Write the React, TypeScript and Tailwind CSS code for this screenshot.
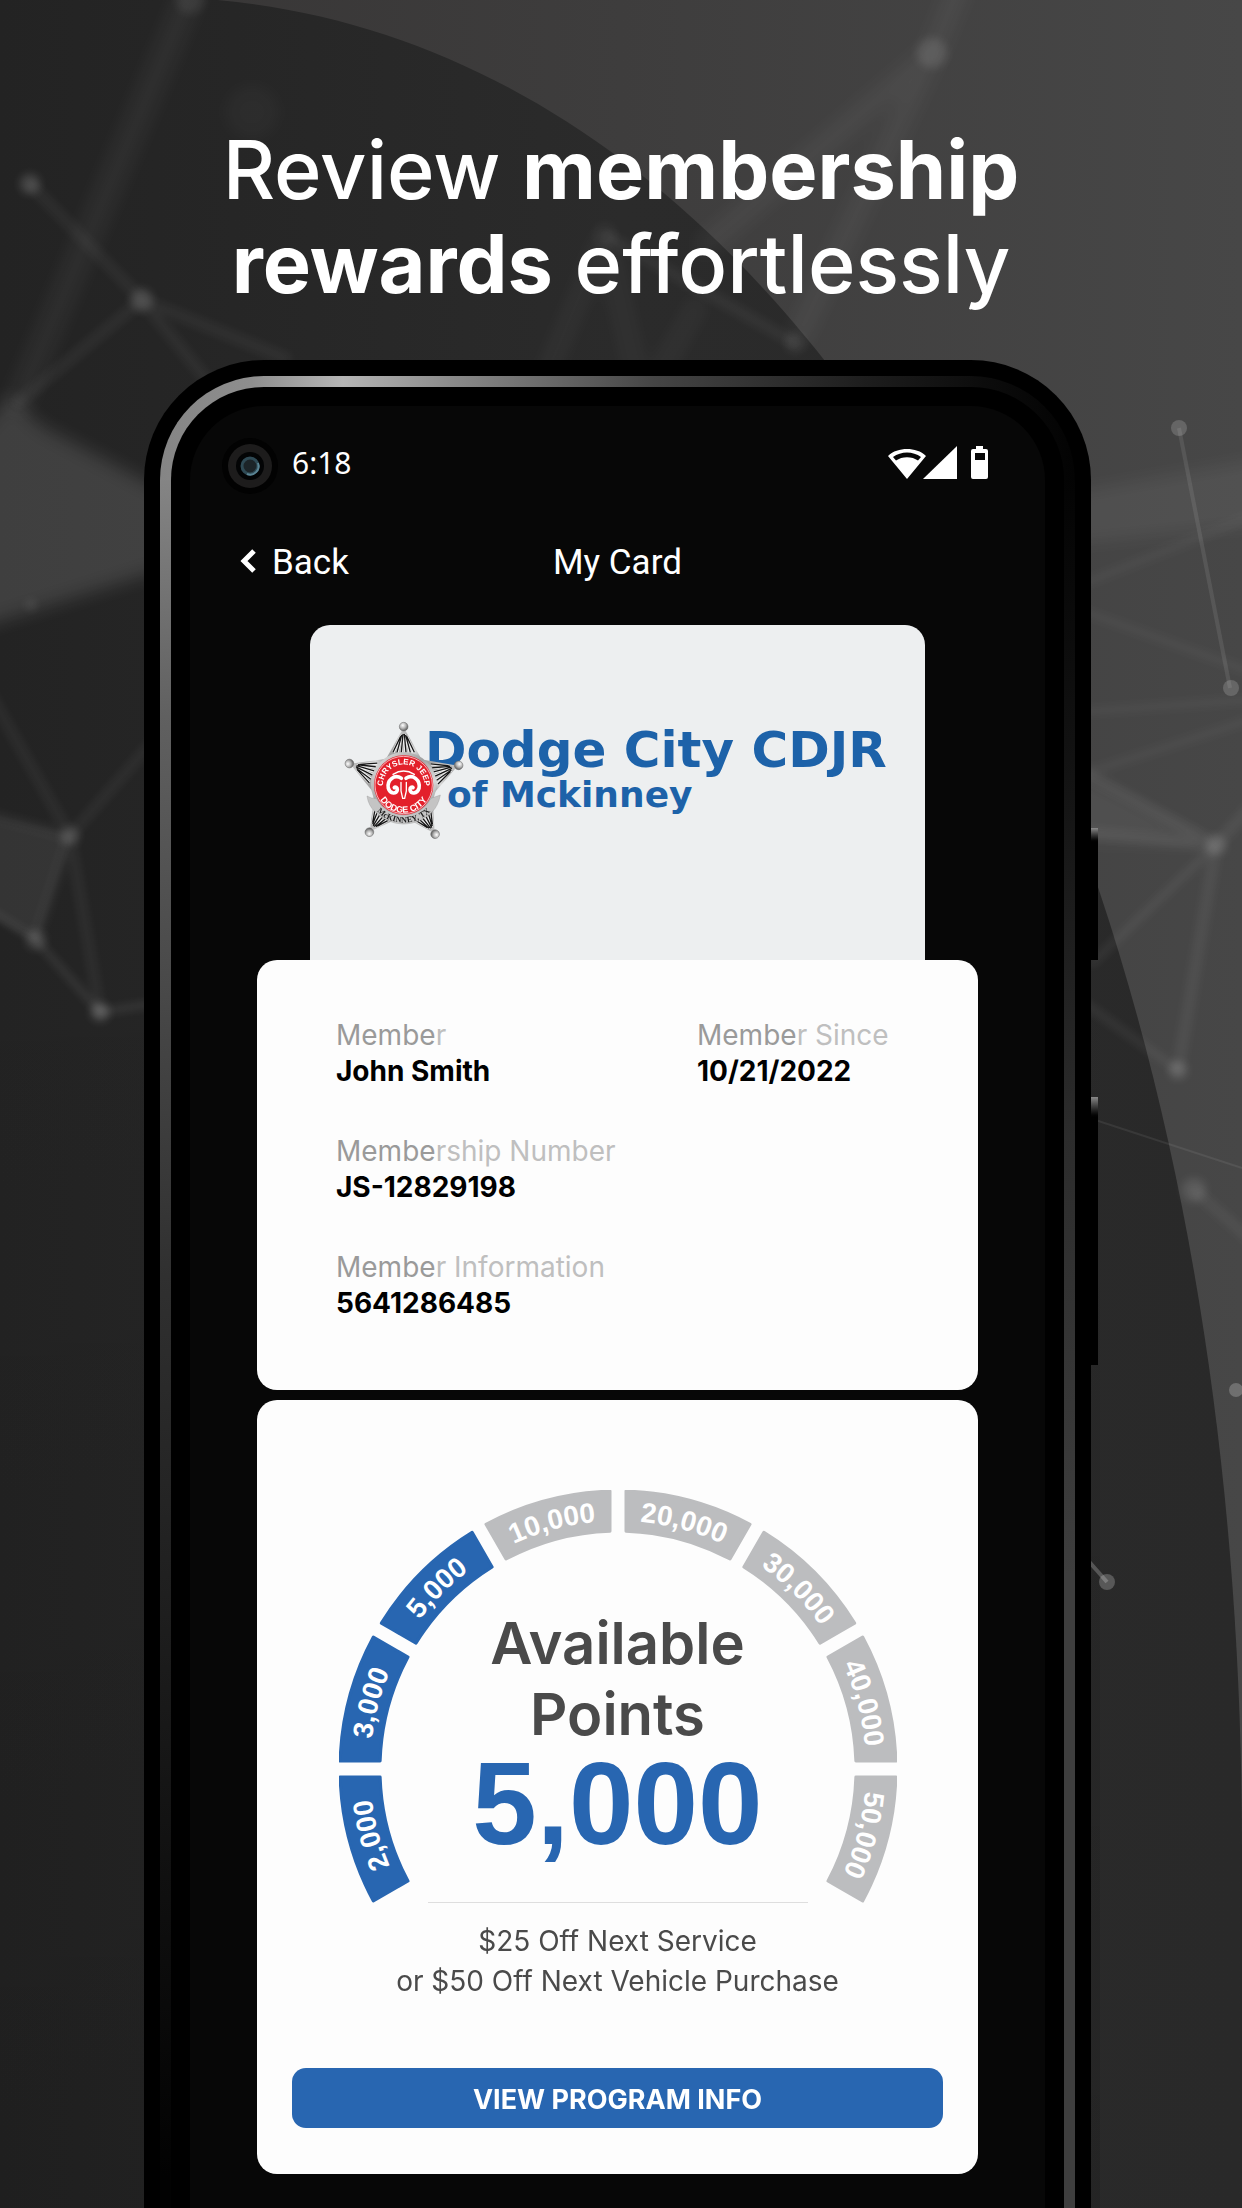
import { Fragment } from "react";

type Segment = { label: string; reached: boolean };

const SEGMENTS: Segment[] = [
  { label: "2,000", reached: true },
  { label: "3,000", reached: true },
  { label: "5,000", reached: true },
  { label: "10,000", reached: false },
  { label: "20,000", reached: false },
  { label: "30,000", reached: false },
  { label: "40,000", reached: false },
  { label: "50,000", reached: false },
];

const FIELDS = [
  { lead: "Membe", rest: "r", value: "John Smith", wide: false },
  { lead: "Membe", rest: "r Since", value: "10/21/2022", wide: false },
  { lead: "Membe", rest: "rship Number", value: "JS-12829198", wide: true },
  { lead: "Membe", rest: "r Information", value: "5641286485", wide: true },
];

const CENTER = 279;
const OUTER = 278;
const INNER = 238;
const HALF_GAP = 8;

/** Point on a circle round the gauge centre; angle in degrees clockwise from the top. */
function polar(radius: number, angle: number) {
  const rad = (angle * Math.PI) / 180;
  return `${(CENTER + radius * Math.sin(rad)).toFixed(2)} ${(CENTER - radius * Math.cos(rad)).toFixed(2)}`;
}

function segmentPath(start: number) {
  const end = start + 30;
  const o = (Math.asin(HALF_GAP / OUTER) * 180) / Math.PI;
  const i = (Math.asin(HALF_GAP / INNER) * 180) / Math.PI;
  return `M${polar(OUTER, start + o)} A${OUTER} ${OUTER} 0 0 1 ${polar(OUTER, end - o)} L${polar(INNER, end - i)} A${INNER} ${INNER} 0 0 0 ${polar(INNER, start + i)} Z`;
}

function Gauge() {
  return (
    <svg viewBox="0 0 558 413" className="col-start-1 row-start-1 w-full" aria-label="Reward levels">
      {SEGMENTS.map((s, n) => {
        const start = -120 + n * 30;
        const color = s.reached ? "#2866b1" : "#bcbdbf";
        return (
          <Fragment key={s.label}>
            <path d={segmentPath(start)} fill={color} stroke={color} strokeWidth="3" strokeLinejoin="round" />
            <path id={`level-${n}`} d={`M${polar(248, start)} A248 248 0 0 1 ${polar(248, start + 30)}`} fill="none" />
            <text fill="#fff" fontSize="28" fontWeight="700" textAnchor="middle" className="font-['Liberation_Sans',sans-serif]">
              <textPath href={`#level-${n}`} startOffset="50%">
                {s.label}
              </textPath>
            </text>
          </Fragment>
        );
      })}
    </svg>
  );
}

function Backdrop() {
  return (
    <svg
      viewBox="0 0 1242 2208"
      preserveAspectRatio="xMidYMid slice"
      className="absolute inset-0 h-full w-full"
      aria-hidden="true"
    >
      <defs>
        <linearGradient id="bg-light" x1="0" y1="0" x2="1" y2="0">
          <stop offset="0" stopColor="#363434" />
          <stop offset="0.5" stopColor="#3e3d3d" />
          <stop offset="1" stopColor="#474747" />
        </linearGradient>
        <linearGradient id="bg-dark" x1="0" y1="0" x2="1" y2="0">
          <stop offset="0" stopColor="#232323" />
          <stop offset="0.5" stopColor="#2b2b2b" />
          <stop offset="1" stopColor="#292929" />
        </linearGradient>
        <linearGradient id="bg-fade" x1="0" y1="0" x2="0" y2="1">
          <stop offset="0.4" stopColor="#000" stopOpacity="0" />
          <stop offset="1" stopColor="#000" stopOpacity="0.12" />
        </linearGradient>
        <filter id="soft4" filterUnits="userSpaceOnUse" x="-100" y="-100" width="1442" height="2408">
          <feGaussianBlur stdDeviation="4" />
        </filter>
        <filter id="soft10" filterUnits="userSpaceOnUse" x="-200" y="-200" width="1642" height="2608">
          <feGaussianBlur stdDeviation="9" />
        </filter>
      </defs>
      <rect width="1242" height="2208" fill="url(#bg-light)" />
      <path d="M0 -3 H150 C783 -3 1242 775 1242 1850 V2208 H0 Z" fill="url(#bg-dark)" />
      <rect width="1100" height="2208" fill="url(#bg-fade)" />
      <g fill="#fff" filter="url(#soft10)">
        <path d="M10 395 L40 425 L180 500 V564 L-60 640 V480 Z" opacity="0.13" />
        <path d="M1060 495 L1300 452 V520 L1060 545 Z" opacity="0.06" />
        <circle cx="252" cy="112" r="26" opacity="0.03" />
        <path d="M1060 765 L1216 845 L1060 840 Z" opacity="0.06" />
      </g>
      <path d="M-30 812 L70 836 L36 940 L-30 903 Z" fill="#fff" opacity="0.08" filter="url(#soft4)" />
      <g stroke="#fff" fill="none" filter="url(#soft10)">
        <path d="M196 -20 L15 410" strokeWidth="24" opacity="0.05" />
        <path d="M605 235 L540 390 M605 235 L640 390 M700 300 L650 390" strokeWidth="14" opacity="0.05" />
        <path d="M970 -40 L932 53 L795 343 M932 53 L700 250" strokeWidth="20" opacity="0.05" />
      </g>
      <g stroke="#fff" fill="none" filter="url(#soft4)">
        <path
          d="M30 184 L142 300 L215 390 M142 300 L290 360 M142 300 L15 405 M605 235 L795 343"
          strokeWidth="11"
          opacity="0.05"
        />
        <path d="M-20 676 L70 836 L170 722 M-20 812 L70 836 L36 940 M70 836 L100 1012" strokeWidth="10" opacity="0.05" />
        <path d="M-20 905 L36 940 L100 1012 L170 1001" strokeWidth="6" opacity="0.1" />
        <path d="M1080 770 L1216 845 L1080 832 M1216 845 L1280 775 M1216 845 L1178 1070" strokeWidth="11" opacity="0.06" />
        <path d="M1216 845 L1090 965 M1080 1000 L1178 1070" strokeWidth="7" opacity="0.07" />
        <path d="M1080 610 L1262 676 M1080 585 L1262 512 M1080 712 L1262 699 M1080 775 L1262 716" strokeWidth="9" opacity="0.04" />
        <path d="M1194 1190 L1260 1248" strokeWidth="10" opacity="0.06" />
      </g>
      <g stroke="#fff" fill="none">
        <path d="M1179 428 L1230 688" strokeWidth="4" opacity="0.09" />
        <path d="M1080 1115 L1242 1168" strokeWidth="2" opacity="0.07" />
        <path d="M1085 1557 L1107 1582" strokeWidth="4" opacity="0.22" />
      </g>
      <g fill="#fff" filter="url(#soft4)">
        <circle cx="30" cy="184" r="10" opacity="0.16" />
        <circle cx="142" cy="300" r="11" opacity="0.15" />
        <circle cx="31" cy="605" r="5" opacity="0.1" />
        <circle cx="70" cy="836" r="9" opacity="0.16" />
        <circle cx="36" cy="940" r="10" opacity="0.13" />
        <circle cx="100" cy="1012" r="9" opacity="0.2" />
        <circle cx="932" cy="53" r="15" opacity="0.11" />
        <circle cx="605" cy="235" r="12" opacity="0.04" />
        <circle cx="795" cy="343" r="10" opacity="0.07" />
        <circle cx="190" cy="0" r="14" opacity="0.07" />
        <circle cx="1216" cy="845" r="10" opacity="0.14" />
        <circle cx="1178" cy="1070" r="9" opacity="0.15" />
        <circle cx="1194" cy="1190" r="12" opacity="0.11" />
      </g>
      <g fill="#fff">
        <circle cx="1179" cy="428" r="8" opacity="0.17" />
        <circle cx="1231" cy="688" r="8" opacity="0.17" />
        <circle cx="1236" cy="1390" r="7" opacity="0.22" />
        <circle cx="1107" cy="1582" r="8" opacity="0.22" />
      </g>
    </svg>
  );
}

function Camera() {
  return (
    <svg width="56" height="56" viewBox="0 0 56 56" aria-hidden="true">
      <circle cx="28" cy="28" r="28" fill="#020202" />
      <circle cx="28" cy="28" r="22" fill="#1d1c1c" />
      <circle cx="28" cy="28" r="14" fill="#030405" />
      <circle cx="28" cy="28" r="8" fill="#1c2428" stroke="#2f4a55" strokeWidth="3" />
      <path d="M36 25 A8.500 8.500 0 0 1 25 36" fill="none" stroke="#5a8494" strokeWidth="2" />
    </svg>
  );
}

function StatusIcons() {
  return (
    <svg width="100" height="33" viewBox="0 0 100 33" fill="#fff" aria-label="Wi-Fi, signal, battery">
      <path
        fillRule="evenodd"
        d="M0 10 C5 5 12 3 19 3 C26 3 33 5 38 10 L19 33 Z M5 11 L8 14.500 C14 10 24 10 30 14.500 L33 11 C25 5 13 5 5 11 Z"
      />
      <path d="M35 33 L69 0 V33 Z" />
      <path
        fillRule="evenodd"
        d="M88 0 H95 V3 H98 Q100 3 100 5 V31 Q100 33 98 33 H85 Q83 33 83 31 V5 Q83 3 85 3 H88 Z M87 7 V14 H97 V7 Z"
      />
    </svg>
  );
}

const ARMS = [0, -68.4, 70.3, -144, 147.4];

function Badge() {
  return (
    <svg viewBox="40 30 366 366" className="relative z-10 size-[122px] shrink-0" aria-label="Sheriff badge">
      <defs>
        <linearGradient id="metal" x1="0" y1="0" x2="1" y2="1">
          <stop offset="0" stopColor="#e8e8e8" />
          <stop offset="0.45" stopColor="#a2a2a2" />
          <stop offset="0.7" stopColor="#d9d9d9" />
          <stop offset="1" stopColor="#7c7c7c" />
        </linearGradient>
        <radialGradient id="ball" cx="0.4" cy="0.35" r="0.7">
          <stop offset="0" stopColor="#ffffff" />
          <stop offset="0.5" stopColor="#b5b5b5" />
          <stop offset="1" stopColor="#4c4c4c" />
        </radialGradient>
      </defs>
      {ARMS.map((a) => (
        <g key={a} transform={`translate(222 222) rotate(${a})`}>
          <path d="M-60 -66 L-6 -162 H6 L60 -66 Z" fill="url(#metal)" />
          <path
            d="M-31 -98 L-9 -146 M-19 -98 L-6 -150 M-6 -98 L-2 -153 M6 -98 L2 -153 M19 -98 L6 -150 M31 -98 L9 -146"
            stroke="#f4f4f4"
            strokeWidth="8"
          />
          <path
            d="M-32 -98 L-9 -146 M-20 -98 L-6 -150 M-7 -98 L-2 -153 M7 -98 L2 -153 M20 -98 L6 -150 M32 -98 L9 -146"
            stroke="#161616"
            strokeWidth="4"
          />
          <circle cx="0" cy="-175" r="13" fill="url(#ball)" stroke="#666" strokeWidth="1.500" />
        </g>
      ))}
      <circle cx="222" cy="222" r="98" fill="url(#metal)" />
      <path
        d="M112 255 Q126 264 140 262 A92 92 0 0 0 304 262 L332 252 Q326 284 308 302 A118 118 0 0 1 136 302 Q116 284 112 255 Z"
        fill="#c4c4c4"
        stroke="#8b8b8b"
      />
      <circle cx="222" cy="222" r="89" fill="#e3202b" />
      <circle cx="222" cy="222" r="86" fill="none" stroke="#fff" strokeWidth="2" />
      <path id="badge-top" d="M165 247 A62 62 0 1 1 279 247" fill="none" />
      <path id="badge-bottom" d="M140 235 A83 83 0 0 0 304 235" fill="none" />
      <path id="badge-ribbon" d="M119 267 A112 112 0 0 0 325 267" fill="none" />
      <g fontWeight="700" textAnchor="middle" className="font-['Liberation_Sans',sans-serif]">
        <text fontSize="24" fill="#fff">
          <textPath href="#badge-top" startOffset="50%">CHRYSLER JEEP</textPath>
        </text>
        <text fontSize="27" fill="#fff">
          <textPath href="#badge-bottom" startOffset="50%">DODGE CITY</textPath>
        </text>
      </g>
      <text fontSize="25" fontWeight="700" fill="#1b1b1b" textAnchor="middle" className="font-['Liberation_Serif',serif]">
        <textPath href="#badge-ribbon" startOffset="50%">McKINNEY, TX</textPath>
      </text>
      <g fill="none" stroke="#fff" strokeLinecap="round">
        <path d="M215 202 C194 188 171 208 176 232 C181 250 202 250 203 236 C203 229 197 226 194 230" strokeWidth="11" />
        <path d="M229 202 C250 188 273 208 268 232 C263 250 242 250 241 236 C241 229 247 226 250 230" strokeWidth="11" />
        <path d="M214 214 L214 240 L219 262 H225 L230 240 L230 214" strokeWidth="4" />
        <path d="M190 190 Q222 170 254 190" strokeWidth="4" />
      </g>
    </svg>
  );
}

function StatusBar() {
  return (
    <div className="flex h-[56px] items-center pr-[57px] pl-[32px]">
      <Camera />
      <span className="ml-[14px] pb-[6px] text-[30px] leading-[40px] text-white font-['Noto_Sans',sans-serif]">6:18</span>
      <span className="ml-auto pb-[8px]">
        <StatusIcons />
      </span>
    </div>
  );
}

function NavBar() {
  return (
    <nav className="mt-[45px] grid h-[48px] grid-cols-3 items-center px-[50px] text-[35px] leading-[48px] text-white font-['Roboto',sans-serif]">
      <button type="button" className="flex items-center gap-[16px] justify-self-start">
        <svg width="16" height="24" viewBox="0 0 16 24" fill="none" stroke="#fff" strokeWidth="5" aria-hidden="true" className="-mt-[4px]">
          <path d="M14 2 L4 12 L14 22" />
        </svg>
        Back
      </button>
      <h2 className="text-center">My Card</h2>
    </nav>
  );
}

function DealerCard() {
  return (
    <section className="mx-[120px] mt-[38px] flex h-[335px] items-start rounded-t-[20px] bg-[#edeff0] pt-[96px] pl-[33px]">
      <Badge />
      <div className="-ml-[40px] mt-[4px] font-bold whitespace-nowrap text-[#1d62a9] font-['DejaVu_Sans',sans-serif]">
        <p className="text-[50px] leading-[50px]">Dodge City CDJR</p>
        <p className="pl-[22px] text-[36px] leading-[40px]">of Mckinney</p>
      </div>
    </section>
  );
}

function MemberCard() {
  return (
    <dl className="mx-[67px] grid grid-cols-[361fr_206fr] gap-y-[44px] rounded-[20px] bg-[#fdfdfd] pt-[57px] pr-[75px] pb-[69px] pl-[79px] text-[28px] leading-[36px]">
      {FIELDS.map((f) => (
        <div key={f.value} className={f.wide ? "col-span-2" : ""}>
          <dt className="text-[#bfbfbf]">
            <span className="text-[#9a9a9a]">{f.lead}</span>
            {f.rest}
          </dt>
          <dd className="font-bold text-black">{f.value}</dd>
        </div>
      ))}
    </dl>
  );
}

function PointsCard() {
  return (
    <section className="mx-[67px] mt-[10px] flex flex-col items-center rounded-[20px] bg-[#fdfdfd] px-[35px] pt-[90px] pb-[46px]">
      <div className="grid w-[558px] max-w-full">
        <Gauge />
        <div className="col-start-1 row-start-1 flex flex-col items-center pt-[118px] text-center">
          <h3 className="text-[58px] leading-[71px] font-semibold text-[#4a4a4a]">
            Available
            <br />
            Points
          </h3>
          <p className="text-[116px] leading-[108px] font-bold text-[#2866b1] font-['Liberation_Sans',sans-serif]">5,000</p>
          <hr className="mt-[44px] w-[380px] border-[#dedede]" />
        </div>
      </div>
      <p className="mt-[18px] text-center text-[28px] leading-[40px] text-[#4a4a4a]">
        $25 Off Next Service
        <br />
        or $50 Off Next Vehicle Purchase
      </p>
      <button type="button" className="mt-[67px] h-[60px] w-full rounded-[14px] bg-[#2866b1] pt-[4px] text-[27px] font-bold text-white">
        VIEW PROGRAM INFO
      </button>
    </section>
  );
}

export default function App() {
  return (
    <main className="relative flex min-h-screen flex-col overflow-hidden bg-[#2a2a2a] font-['Inter',sans-serif]">
      <Backdrop />
      <h1 className="relative pt-[123px] text-center text-[81px] leading-[94px] font-medium text-white">
        Review <strong className="font-bold">membership</strong>
        <br />
        <strong className="font-bold">rewards</strong> effortlessly
      </h1>
      <div className="relative mx-[144px] mt-[49px] flex flex-1">
        <div className="flex flex-1 flex-col rounded-t-[120px] bg-black px-[16px] pt-[16px]">
          <div className="flex flex-1 flex-col rounded-t-[104px] px-[11px] pt-[11px] [background:linear-gradient(to_right,#858585_0%,#8e8e8e_10%,#b5b5b5_20%,#8a8a8a_32%,#454545_54%,#1c1c1c_78%,#0c0c0c_90%,#030303_100%)_top/100%_104px_no-repeat,linear-gradient(to_bottom,#858585_100px,#606060_340px,#303030_900px,#101010_1500px,#020202_1800px)_left/50%_100%_no-repeat,linear-gradient(to_bottom,#030303_100px,#141414_420px,#2c2c2c_760px,#3e3e3e_1200px,#3e3e3e_100%)_right/50%_100%_no-repeat]">
            <div className="flex flex-1 flex-col rounded-t-[93px] bg-black px-[19px] pt-[19px]">
              <div className="flex-1 rounded-t-[74px] bg-[#070707] pt-[32px] pb-[33px]">
                <StatusBar />
                <NavBar />
                <DealerCard />
                <MemberCard />
                <PointsCard />
              </div>
            </div>
          </div>
        </div>
        <div className="flex w-[7px] flex-col gap-[137px] pt-[468px]">
          <div className="h-[132px] bg-linear-to-b from-[#8a8a8a] to-black to-[15px]" />
          <div className="h-[268px] bg-linear-to-b from-[#8a8a8a] to-black to-[22px]" />
        </div>
      </div>
    </main>
  );
}
